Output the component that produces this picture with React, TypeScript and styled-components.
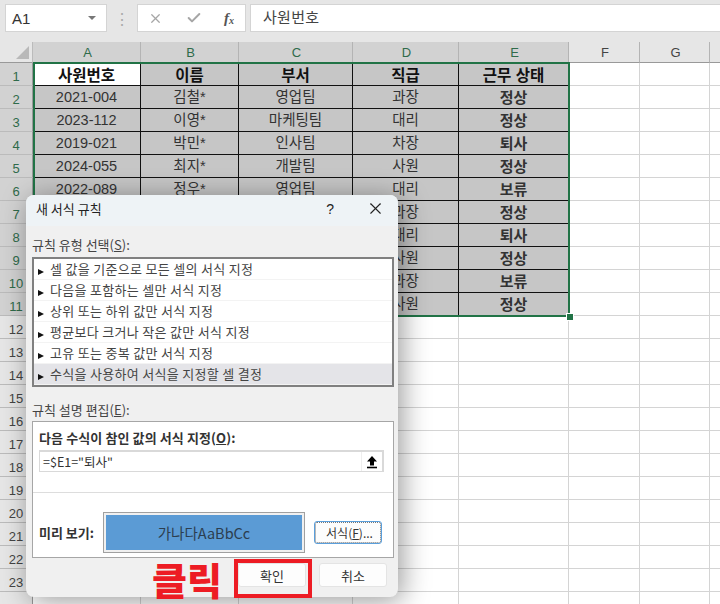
import React from 'react'
import styled, { createGlobalStyle } from 'styled-components'
import { X, Check } from 'lucide-react'

const columns = ['A', 'B', 'C', 'D', 'E', 'F', 'G', '']
const columnWidths = '108px 98px 114px 106px 110px 71px 70px 70px'
const font = '"Noto Sans CJK KR", sans-serif'

// rows 7-11 are covered by the dialog up to column C
const tableRows = [
  ['사원번호', '이름', '부서', '직급', '근무 상태'],
  ['2021-004', '김철*', '영업팀', '과장', '정상'],
  ['2023-112', '이영*', '마케팅팀', '대리', '정상'],
  ['2019-021', '박민*', '인사팀', '차장', '퇴사'],
  ['2024-055', '최지*', '개발팀', '사원', '정상'],
  ['2022-089', '정우*', '영업팀', '대리', '보류'],
  ['', '', '', '과장', '정상'],
  ['', '', '', '대리', '퇴사'],
  ['', '', '', '사원', '정상'],
  ['', '', '', '과장', '보류'],
  ['', '', '', '사원', '정상'],
]

const ruleTypes = [
  '셀 값을 기준으로 모든 셀의 서식 지정',
  '다음을 포함하는 셀만 서식 지정',
  '상위 또는 하위 값만 서식 지정',
  '평균보다 크거나 작은 값만 서식 지정',
  '고유 또는 중복 값만 서식 지정',
  '수식을 사용하여 서식을 지정할 셀 결정',
]

const App = () => {
  const rowNumbers = Array.from({ length: 24 }, (_, i) => i + 1)

  return (
    <Page>
      <GlobalStyle />
      <Toolbar>
        <NameBox>
          <span>A1</span>
          <Caret />
        </NameBox>
        <Grip>⋮</Grip>
        <FormulaButtons>
          <X size={15} color="#a6a6a6" strokeWidth={2} />
          <Check size={16} color="#a6a6a6" strokeWidth={3} />
          <FxLabel>f<sub>x</sub></FxLabel>
        </FormulaButtons>
        <FormulaInput>사원번호</FormulaInput>
      </Toolbar>

      <SheetGrid>
        <CornerCell><CornerMark /></CornerCell>
        {columns.map((col, i) => (
          <ColumnHeader key={i} $selected={i < 5}>{col}</ColumnHeader>
        ))}
        {rowNumbers.map((num) => (
          <React.Fragment key={num}>
            <RowHeader $selected={num <= 11}>{num < 24 ? num : ''}</RowHeader>
            {columns.map((_, i) => {
              const value = tableRows[num - 1]?.[i]
              if (value === undefined) return <EmptyCell key={i} />
              return (
                <DataCell
                  key={i}
                  $header={num === 1}
                  $active={num === 1 && i === 0}
                  $bold={num === 1 || i === 4}
                >
                  {value}
                </DataCell>
              )
            })}
          </React.Fragment>
        ))}
        <Selection><FillHandle /></Selection>
      </SheetGrid>

      <Dialog>
        <TitleBar>
          <DialogTitle>새 서식 규칙</DialogTitle>
          <HelpMark>?</HelpMark>
          <X size={19} color="#222" strokeWidth={1.4} />
        </TitleBar>
        <DialogBody>
          <SectionLabel $gap={11}>규칙 유형 선택(<u>S</u>):</SectionLabel>
          <RuleList>
            {ruleTypes.map((rule, i) => (
              <RuleItem key={rule} $selected={i === 5}>
                <RuleArrow />
                {rule}
              </RuleItem>
            ))}
          </RuleList>
          <SectionLabel $gap={15}>규칙 설명 편집(<u>E</u>):</SectionLabel>
          <EditPanel>
            <EditTitle>다음 수식이 참인 값의 서식 지정(<u>O</u>):</EditTitle>
            <FormulaField>
              <span>=$E1="퇴사"</span>
              <RangeButton>
                <svg width="12" height="14" viewBox="0 0 12 14">
                  <path d="M6 1 11 6.5H8V10.5H4V6.5H1Z" fill="#000" />
                  <path d="M1 12.5H11" stroke="#000" strokeWidth="1.6" />
                </svg>
              </RangeButton>
            </FormulaField>
            <PanelRule />
            <PreviewRow>
              <PreviewLabel>미리 보기:</PreviewLabel>
              <PreviewBox>가나다AaBbCc</PreviewBox>
              <FormatButton>서식(<u>F</u>)...</FormatButton>
            </PreviewRow>
          </EditPanel>
          <ButtonRow>
            <ActionButton>확인</ActionButton>
            <ActionButton>취소</ActionButton>
          </ButtonRow>
        </DialogBody>
      </Dialog>

      <ClickLabel>클릭</ClickLabel>
      <ClickHighlight />
    </Page>
  )
}

export default App

const GlobalStyle = createGlobalStyle`
  html, body {
    margin: 0;
    padding: 0;
    background: #fff;
  }
  * {
    box-sizing: border-box;
  }
`

const Page = styled.main`
  position: relative;
  width: 720px;
  height: 604px;
  overflow: hidden;
  font-family: ${font};
  background: #fff;
`

const Toolbar = styled.header`
  height: 42px;
  background: #e6e6e6;
  display: flex;
  align-items: flex-start;
  padding: 4px 0 0 5px;
`

const NameBox = styled.div`
  width: 102px;
  height: 28px;
  background: #fff;
  border: 1px solid #d4d4d4;
  display: flex;
  align-items: center;
  justify-content: space-between;
  padding: 0 10px 0 6px;
  font: 15px "Liberation Sans", sans-serif;
  color: #333;
`

const Caret = styled.i`
  width: 0;
  height: 0;
  border-left: 4px solid transparent;
  border-right: 4px solid transparent;
  border-top: 4px solid #777;
`

const Grip = styled.div`
  width: 30px;
  height: 28px;
  text-align: center;
  font-size: 16px;
  line-height: 28px;
  color: #aaa;
`

const FormulaButtons = styled.div`
  width: 109px;
  height: 28px;
  background: #fff;
  border: 1px solid #d4d4d4;
  display: flex;
  align-items: center;
  justify-content: space-between;
  padding: 0 11px 0 10px;
`

const FxLabel = styled.span`
  font: italic bold 15px "Liberation Serif", serif;
  color: #555;
  sub {
    font-size: 10px;
    vertical-align: -1px;
  }
`

const FormulaInput = styled.div`
  flex: 1;
  height: 28px;
  margin-left: 4px;
  background: #fff;
  border: 1px solid #d4d4d4;
  border-right: none;
  padding-left: 12px;
  font-size: 15px;
  letter-spacing: 0.3px;
  line-height: 23px;
  color: #444;
`

const SheetGrid = styled.section`
  position: relative;
  display: grid;
  grid-template-columns: 33px ${columnWidths};
  grid-template-rows: 21px repeat(24, 23px);
`

const CornerCell = styled.div`
  background: #e6e6e6;
  border-right: 1px solid #bbb;
  border-bottom: 1px solid #999;
  position: relative;
`

const CornerMark = styled.i`
  position: absolute;
  right: 3px;
  bottom: 3px;
  width: 0;
  height: 0;
  border-left: 13px solid transparent;
  border-bottom: 13px solid #b9b9b9;
`

const ColumnHeader = styled.div<{ $selected: boolean }>`
  background: ${(p) => (p.$selected ? '#d2d2d2' : '#e6e6e6')};
  border-right: 1px solid #b4b4b4;
  border-bottom: 1px solid #999;
  color: ${(p) => (p.$selected ? '#2f6b4a' : '#444')};
  font: 13px "Liberation Sans", sans-serif;
  display: flex;
  align-items: center;
  justify-content: center;
  padding-left: 2px;
`

const RowHeader = styled.div<{ $selected: boolean }>`
  background: ${(p) => (p.$selected ? '#d2d2d2' : '#e6e6e6')};
  border-right: 1px solid #999;
  border-bottom: 1px solid #bbb;
  color: ${(p) => (p.$selected ? '#2f6b4a' : '#444')};
  font: 13px "Liberation Sans", sans-serif;
  display: flex;
  align-items: center;
  justify-content: center;
  padding-top: 4px;
`

const EmptyCell = styled.div`
  border-right: 1px solid #d4d4d4;
  border-bottom: 1px solid #d4d4d4;
`

const DataCell = styled.div<{ $header: boolean; $active: boolean; $bold: boolean }>`
  background: ${(p) => (p.$active ? '#fff' : '#c6c6c6')};
  border-right: 1.5px solid #111;
  border-bottom: 1.5px solid #111;
  font-family: "Liberation Sans", ${font};
  font-size: ${(p) => (p.$header ? 15.5 : p.$bold ? 15 : 14.5)}px;
  font-weight: ${(p) => (p.$bold ? 700 : 400)};
  color: ${(p) => (p.$header ? '#111' : '#333')};
  display: flex;
  align-items: center;
  justify-content: center;
  line-height: 1;
  padding-top: ${(p) => (p.$header ? 3 : 1)}px;
`

const Selection = styled.div`
  position: absolute;
  left: 33px;
  top: 20px;
  width: 537px;
  height: 255px;
  border: 2px solid #217346;
  pointer-events: none;
`

const FillHandle = styled.i`
  position: absolute;
  right: -5px;
  bottom: -5px;
  width: 6px;
  height: 6px;
  background: #217346;
  outline: 1px solid #fff;
`

const Dialog = styled.section`
  position: absolute;
  left: 26px;
  top: 195px;
  width: 372px;
  height: 402px;
  background: #f0f0f0;
  border-radius: 8px;
  box-shadow: 4px 4px 28px rgba(0, 0, 0, 0.4);
  overflow: hidden;
  color: #333;
`

const TitleBar = styled.div`
  height: 31px;
  background: #eef3f6;
  display: flex;
  align-items: center;
  padding: 0 13px 4px 10px;
`

const DialogTitle = styled.h1`
  flex: 1;
  margin: 0;
  font-size: 13px;
  font-weight: 400;
  color: #222;
`

const HelpMark = styled.span`
  font: 14px "Liberation Sans", sans-serif;
  margin-right: 32px;
  color: #222;
`

const DialogBody = styled.div`
  padding: 0 4px 0 6px;
`

const SectionLabel = styled.div<{ $gap: number }>`
  height: 15px;
  line-height: 15px;
  margin-top: ${(p) => p.$gap}px;
  margin-bottom: 5px;
  font-size: 13px;
  color: #444;
`

const RuleList = styled.ul`
  margin: 0;
  padding: 0;
  list-style: none;
  height: 130px;
  background: #fff;
  border: 2px solid #808080;
`

const RuleItem = styled.li<{ $selected: boolean }>`
  height: 21px;
  line-height: 20px;
  padding-left: 4px;
  font-size: 13px;
  letter-spacing: 0.3px;
  color: #444;
  background: ${(p) => (p.$selected ? '#e4e4e8' : '#fff')};
  border-bottom: 1px solid #f3f3f3;
  white-space: nowrap;
`

const RuleArrow = styled.i`
  display: inline-block;
  width: 0;
  height: 0;
  border-left: 6px solid #111;
  border-top: 3.5px solid transparent;
  border-bottom: 3.5px solid transparent;
  margin-right: 6px;
  vertical-align: -1px;
`

const EditPanel = styled.div`
  height: 137px;
  margin-top: -1px;
  background: #fff;
  border: 1px solid #a6a6a6;
  padding: 8px 6px 0;
  display: flex;
  flex-direction: column;
`

const EditTitle = styled.div`
  font-size: 13px;
  font-weight: 700;
  letter-spacing: 0.1px;
  line-height: 15px;
  color: #333;
`

const FormulaField = styled.div`
  width: 345px;
  height: 22px;
  margin-top: 5px;
  border: 2px solid #d9d9d9;
  border-left-width: 1px;
  border-bottom-width: 1px;
  display: flex;
  align-items: center;
  justify-content: space-between;
  padding-left: 3px;
  font-size: 12.5px;
  color: #333;
`

const RangeButton = styled.div`
  width: 20px;
  height: 19px;
  display: flex;
  align-items: center;
  justify-content: center;
  background: #fff;
  box-shadow: -1px 0 0 #eee;
`

const PanelRule = styled.hr`
  margin: 20px -6px 0;
  border: none;
  border-top: 1px solid #ddd;
`

const PreviewRow = styled.div`
  display: flex;
  align-items: center;
  margin-top: 20px;
`

const PreviewLabel = styled.span`
  width: 65px;
  font-size: 13px;
  font-weight: 700;
`

const PreviewBox = styled.div`
  width: 200px;
  height: 39px;
  background: #5b9bd5;
  border: 2px solid #f0f0f0;
  outline: 1px solid #a0a0a0;
  display: flex;
  align-items: center;
  justify-content: center;
  font-size: 14.5px;
  color: #2c3e50;
`

const FormatButton = styled.button`
  width: 68px;
  height: 23px;
  margin-left: 10px;
  padding: 0 0 0 3px;
  background: #fdfdfd;
  border: 1px solid #5a9fdc;
  border-radius: 3px;
  outline: 1px dotted #777;
  outline-offset: -2px;
  font-family: ${font};
  font-size: 12px;
  color: #333;
`

const ButtonRow = styled.div`
  display: flex;
  justify-content: flex-end;
  gap: 13px;
  margin-top: 5px;
  padding-right: 7px;
`

const ActionButton = styled.button`
  width: 68px;
  height: 24px;
  padding: 0;
  background: #fdfdfd;
  border: 1px solid #e4e4e4;
  border-radius: 3px;
  font-family: ${font};
  font-size: 13px;
  color: #333;
`

const ClickLabel = styled.div`
  position: absolute;
  left: 152px;
  top: 555px;
  font-size: 38px;
  font-weight: 900;
  line-height: 48px;
  color: #ed1c24;
`

const ClickHighlight = styled.div`
  position: absolute;
  left: 234px;
  top: 559px;
  width: 78px;
  height: 39px;
  border: 4px solid #ed1c24;
`
